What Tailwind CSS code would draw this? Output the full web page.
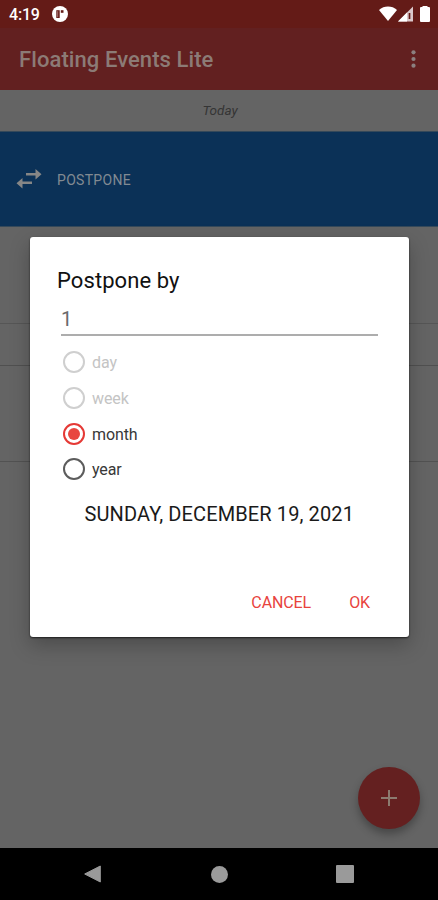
<!DOCTYPE html>
<html lang="en">
<head>
<meta charset="utf-8">
<title>Floating Events Lite</title>
<script src="https://cdn.jsdelivr.net/npm/@tailwindcss/browser@4"></script>
</head>
<body class="w-[438px] h-[900px] overflow-hidden font-[Roboto,sans-serif]">
<div class="relative flex flex-col w-[438px] h-[900px] bg-[#646464]">
  <div class="h-[28px] shrink-0 bg-[#641b17] flex items-center justify-between pl-[9px] pr-[8px] text-white">
    <div class="flex items-center gap-[12px]">
      <span class="text-[16px] leading-[28px] pt-[2px] font-medium tracking-[-0.2px] w-[31px] whitespace-nowrap">4:19</span>
      <svg class="w-[16px] h-[16px]" viewBox="0 0 16 16"><circle cx="8" cy="8" r="8" fill="#fff"/><path d="M4.300 4.200h3.400v7.800H4.300z" fill="#641b17"/><path d="M5.700 5.200v6" stroke="#b98f8d" stroke-width=".8"/><path d="M8.800 4.200h2.700v2.600H8.800z" fill="#641b17"/></svg>
    </div>
    <div class="flex items-center">
      <svg class="w-[18px] h-[16px]" viewBox="0 0 18 16"><path d="M0 4C5-.6 13-.6 18 4L9 15z" fill="#fff"/></svg>
      <svg class="w-[15px] h-[16px] ml-px" viewBox="0 0 15 16"><path d="M0 15.500L15 .5v15z" fill="#dbc8cb"/><path d="M0 15.500L9 6.500v9z" fill="#fff"/><path d="M11.500 7v6" stroke="#641b17" stroke-width="1.700"/></svg>
      <svg class="w-[10px] h-[16px] ml-[7px]" viewBox="0 0 10 16"><path d="M2.500 0h5v1h1.500a1 1 0 0 1 1 1V15a1 1 0 0 1-1 1H1a1 1 0 0 1-1-1V2a1 1 0 0 1 1-1h1.500z" fill="#fff"/></svg>
    </div>
  </div>
  <div class="h-[62px] shrink-0 bg-[#622020] flex items-center justify-between pl-[19px] pr-[22px] text-[#8c7b76]">
    <span class="text-[22px] leading-[26px] pt-[2px] tracking-[0.08px] font-medium whitespace-nowrap">Floating Events Lite</span>
    <svg class="w-[5px] h-[18px]" viewBox="0 0 5 18" fill="#8c8080"><circle cx="2.500" cy="2.300" r="2.100"/><circle cx="2.500" cy="9" r="2.100"/><circle cx="2.500" cy="15.700" r="2.100"/></svg>
  </div>
  <div class="h-[41px] shrink-0 flex items-center justify-center pl-[2px] text-[13.500px] italic text-[#353535]"><span>Today</span></div>
  <div class="h-[96px] shrink-0 bg-[#0b3157] border-y border-[#35495a] flex items-center pl-[16px] gap-[15px] text-[#818a92]">
    <svg class="w-[26px] h-[20px]" viewBox="0 0 26 20" fill="#868686"><path d="M10 4h9.500V0L25.500 5.300 19.500 10.500V6.500H10zM16 12.500H6.500V9L.5 14.200l6 5.300V15H16z"/></svg>
    <span class="text-[14px] pt-[2px] tracking-[0.3px]">POSTPONE</span>
  </div>
  <div class="h-[97px] shrink-0 border-b border-[#565656]"></div>
  <div class="h-[42px] shrink-0 border-b border-[#505050]"></div>
  <div class="h-[96px] shrink-0 border-b border-[#525252]"></div>
  <div class="grow flex items-end justify-end pr-[18px] pb-[19px]">
    <div class="w-[62px] h-[62px] rounded-full bg-[#642020] shadow-[0_5px_8px_rgba(0,0,0,0.3)] flex items-center justify-center">
      <svg class="w-[16px] h-[16px]" viewBox="0 0 16 16"><path d="M8 0v16M0 8h16" stroke="#8c7b70" stroke-width="2"/></svg>
    </div>
  </div>
  <div class="h-[52px] shrink-0 bg-black flex items-center justify-between px-[84px]">
    <svg class="w-[17px] h-[18px]" viewBox="0 0 17 18"><path d="M.7 9L16.300 1v16z" fill="#9a9a9a" stroke="#9a9a9a" stroke-linejoin="round"/></svg>
    <div class="w-[17px] h-[17px] ml-px rounded-full bg-[#9a9a9a]"></div>
    <div class="w-[18px] h-[18px] rounded-[1px] bg-[#9a9a9a]"></div>
  </div>

  <div class="absolute left-[29.500px] top-[237px] w-[379.500px] h-[399.500px] rounded-[3px] bg-white shadow-[0_1px_2px_rgba(0,0,0,0.65),0_8px_20px_rgba(0,0,0,0.25)] flex flex-col pt-[29px] px-[27.500px]">
    <h1 class="text-[22px] leading-[30px] text-[#111] tracking-[0.080px] whitespace-nowrap"><span>Postpone by</span></h1>
    <div class="ml-[4px] w-[317px] h-[40px] border-b-2 border-[#adadad] pt-[9px] text-[20px] leading-[28px] text-[#6a6a6a]">1</div>
    <div class="pt-[8px] pl-[6px] flex flex-col text-[16px] text-[#383838]">
      <div class="h-[36px] flex items-center gap-[7px] text-[#c4c4c4]"><div class="w-[22px] h-[22px] rounded-full border-2 border-[#cfcfcf]"></div><span class="pt-[2px] tracking-[-0.1px]">day</span></div>
      <div class="h-[36px] flex items-center gap-[7px] text-[#c4c4c4]"><div class="w-[22px] h-[22px] rounded-full border-2 border-[#cfcfcf]"></div><span class="pt-[2px] tracking-[-0.1px]">week</span></div>
      <div class="h-[35px] flex items-center gap-[7px]"><div class="w-[22px] h-[22px] rounded-full border-2 border-[#e53935] flex items-center justify-center"><div class="w-[12px] h-[12px] rounded-full bg-[#e8463f]"></div></div><span class="pt-[2px] tracking-[-0.1px]">month</span></div>
      <div class="h-[36px] flex items-center gap-[7px]"><div class="w-[22px] h-[22px] rounded-full border-2 border-[#5c5c5c]"></div><span class="pt-[2px] tracking-[-0.1px]">year</span></div>
    </div>
    <div class="mt-[11px] h-[32px] flex items-center justify-center text-[20px] tracking-[0.11px] text-[#1a1a1a] whitespace-nowrap"><span>SUNDAY, DECEMBER 19, 2021</span></div>
    <div class="mt-[63px] flex justify-end gap-[38px] pr-[11.500px] text-[16px] leading-[20px] tracking-[-0.1px] text-[#e8433d]"><span>CANCEL</span><span>OK</span></div>
  </div>
</div>
</body>
</html>
